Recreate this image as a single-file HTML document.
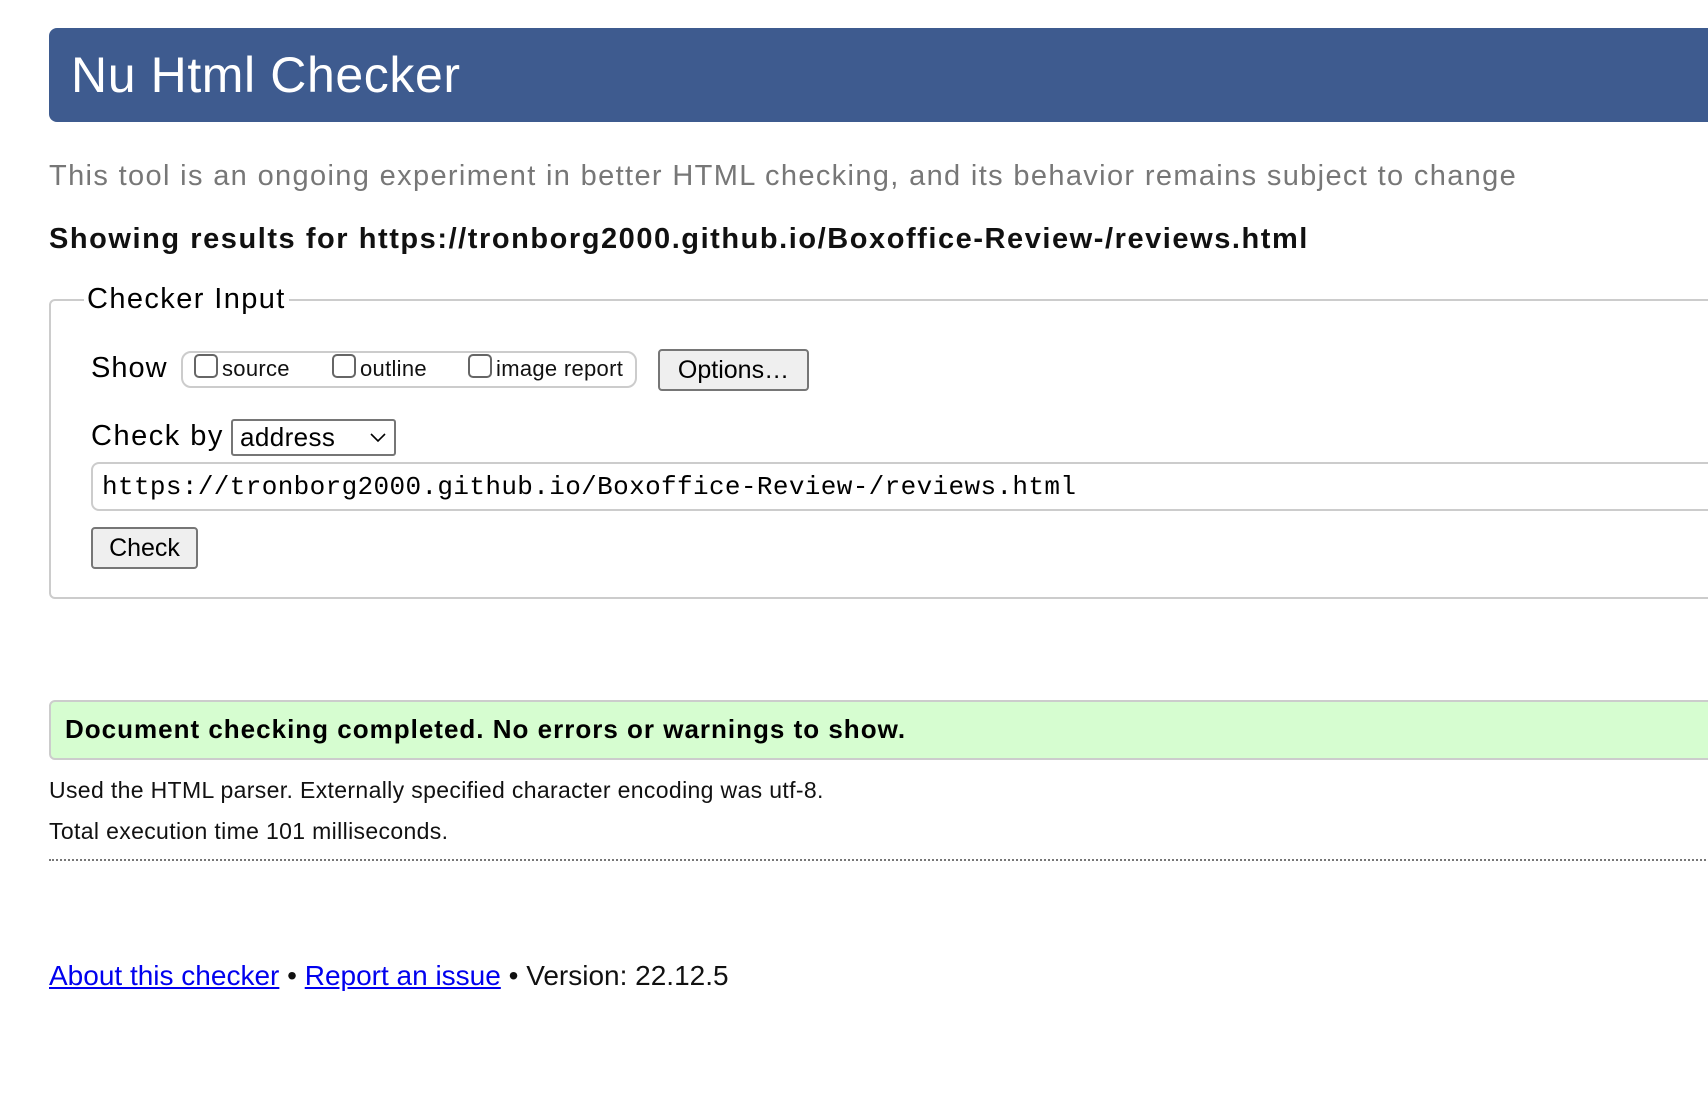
<!DOCTYPE html>
<html><head><meta charset="utf-8"><style>
*{box-sizing:border-box;margin:0;padding:0}
body{width:1708px;height:1118px;background:#fff;font-family:"Liberation Sans",Arial,sans-serif;color:#000;position:relative;overflow:hidden}
.a{position:absolute;white-space:nowrap}
#hdr{left:49px;top:28px;width:1680px;height:94px;background:#3e5b8f;border-radius:8px 0 0 8px}
#hdr span{position:absolute;left:22px;top:18px;color:#fff;font-size:50px;line-height:58px;letter-spacing:0.6px}
.cb{display:inline-block;width:24px;height:24px;border:2px solid #666;border-radius:5px;vertical-align:top;margin-right:4px;background:#fff}
.btn{background:#efefef;border:2px solid #767676;border-radius:4px;font-size:25px;text-align:center}
</style></head><body>
<div id="hdr" class="a"><span>Nu Html Checker</span></div>
<div class="a" style="left:49px;top:159px;font-size:29px;color:#777;line-height:34px;letter-spacing:1.35px">This tool is an ongoing experiment in better HTML checking, and its behavior remains subject to change</div>
<div class="a" style="left:49px;top:222px;font-size:29px;font-weight:bold;color:#111;line-height:34px;letter-spacing:1.55px">Showing results for https://tronborg2000.github.io/Boxoffice-Review-/reviews.html</div>
<div class="a" style="left:49px;top:299px;width:1700px;height:300px;border:2px solid #ccc;border-radius:6px"></div>
<div class="a" style="left:84px;top:282px;font-size:29px;line-height:34px;background:#fff;padding:0 3px;letter-spacing:1.4px">Checker Input</div>
<div class="a" style="left:91px;top:351px;font-size:29px;line-height:34px;letter-spacing:1px">Show</div>
<div class="a" style="left:181px;top:351px;width:456px;height:37px;border:2px solid #ccc;border-radius:10px"></div>
<div class="a" style="left:194px;top:354px;font-size:22px;line-height:30px;color:#111;letter-spacing:0.3px"><span class="cb"></span>source</div>
<div class="a" style="left:332px;top:354px;font-size:22px;line-height:30px;color:#111;letter-spacing:0.3px"><span class="cb"></span>outline</div>
<div class="a" style="left:468px;top:354px;font-size:22px;line-height:30px;color:#111;letter-spacing:0.3px"><span class="cb"></span>image report</div>
<div class="a btn" style="left:658px;top:349px;width:151px;height:42px;line-height:38px">Options…</div>
<div class="a" style="left:91px;top:419px;font-size:29px;line-height:34px;letter-spacing:1.5px">Check by</div>
<div class="a" style="left:231px;top:419px;width:165px;height:37px;border:2px solid #767676;border-radius:3px;font-size:26px;line-height:33px;padding-left:7px;letter-spacing:0.4px">address<svg style="position:absolute;right:8px;top:12px" width="16" height="10" viewBox="0 0 16 10"><path d="M1 1L8 8L15 1" fill="none" stroke="#000" stroke-width="1.6"/></svg></div>
<div class="a" style="left:91px;top:462px;width:1660px;height:49px;border:2px solid #ccc;border-radius:8px;font-family:'Liberation Mono','DejaVu Sans Mono',monospace;font-size:26px;line-height:46px;padding-left:9px;letter-spacing:0.37px">https://tronborg2000.github.io/Boxoffice-Review-/reviews.html</div>
<div class="a btn" style="left:91px;top:527px;width:107px;height:42px;line-height:38px">Check</div>
<div class="a" style="left:49px;top:700px;width:1700px;height:60px;background:#d6fdd0;border:2px solid #ccc;border-radius:6px"></div>
<div class="a" style="left:65px;top:712px;font-size:26px;font-weight:bold;line-height:34px;letter-spacing:1px">Document checking completed. No errors or warnings to show.</div>
<div class="a" style="left:49px;top:776px;font-size:23px;line-height:28px;color:#111;letter-spacing:0.35px">Used the HTML parser. Externally specified character encoding was utf-8.</div>
<div class="a" style="left:49px;top:817px;font-size:23px;line-height:28px;color:#111;letter-spacing:0.35px">Total execution time 101 milliseconds.</div>
<div class="a" style="left:49px;top:859px;width:1700px;border-top:2px dotted #777"></div>
<div class="a" style="left:49px;top:959px;font-size:28px;line-height:34px;color:#111"><span style="color:#00e;text-decoration:underline">About this checker</span> • <span style="color:#00e;text-decoration:underline">Report an issue</span> • Version: 22.12.5</div>
</body></html>
